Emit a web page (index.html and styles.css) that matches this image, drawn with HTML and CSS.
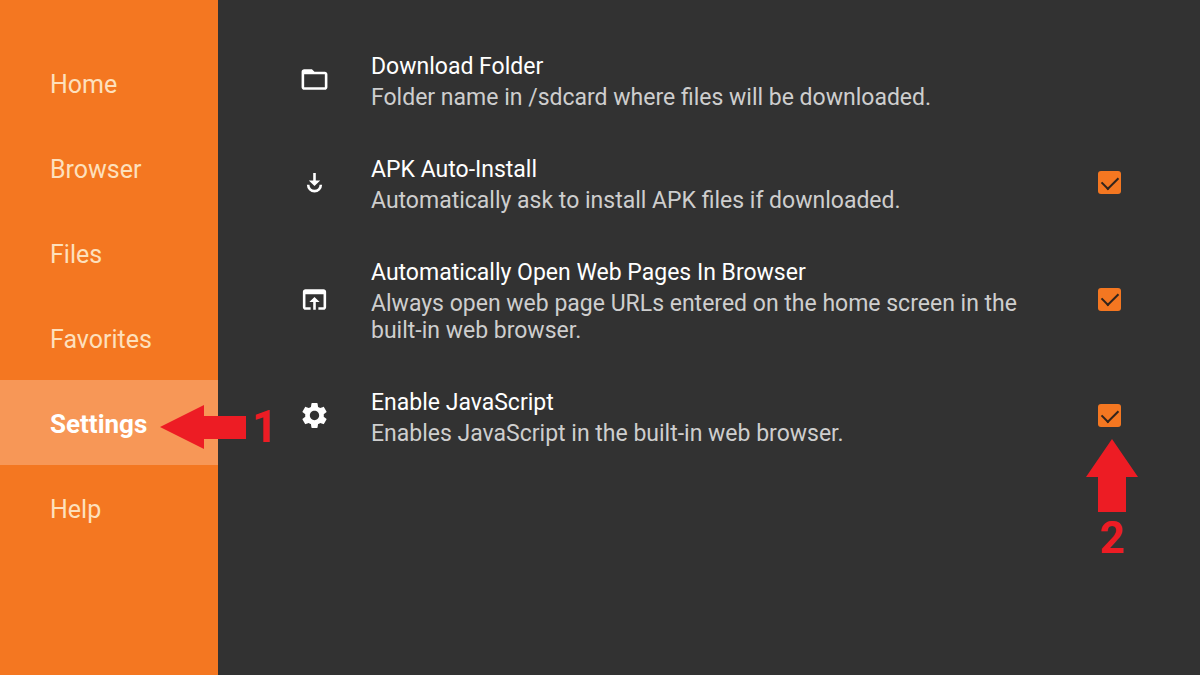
FILE: index.html
```html
<!DOCTYPE html>
<html lang="en">

<head>
  <meta charset="UTF-8">
  <meta name="viewport" content="width=device-width, initial-scale=1">
  <title>Settings</title>
  <link rel="stylesheet" href="styles.css">
</head>

<body>
  <!-- side menu -->
  <nav class="menu">
    <ul>
      <li><a class="menu-item" href="#home">Home</a></li>
      <li><a class="menu-item" href="#browser">Browser</a></li>
      <li><a class="menu-item" href="#files">Files</a></li>
      <li><a class="menu-item" href="#favorites">Favorites</a></li>
      <li class="current">
        <a class="menu-item active" href="#settings">Settings</a>
        <div class="step step-left">
          <svg width="86" height="46" viewBox="0 0 86 46"><path d="M0 23L44 1v11h42v23H44v10z"/></svg>
          <span>1</span>
        </div>
      </li>
      <li><a class="menu-item" href="#help">Help</a></li>
    </ul>
  </nav>

  <!-- settings list -->
  <main class="settings">
    <div class="row">
      <svg class="icon" viewBox="0 0 24 24"><path d="M20 6h-8l-2-2H4c-1.1 0-1.99.9-1.99 2L2 18c0 1.1.9 2 2 2h16c1.1 0 2-.9 2-2V8c0-1.1-.9-2-2-2zm0 12H4V8h16v10z"/></svg>
      <div class="text">
        <div class="title">Download Folder</div>
        <p>Folder name in /sdcard where files will be downloaded.</p>
      </div>
    </div>

    <div class="row">
      <svg class="icon" viewBox="0 0 24 24">
        <path d="M11 4.7h2v5.8h3.4L12 14.8l-4.4-4.3H11z"/>
        <path class="stroke" d="M7.1 13.8a4.9 4.9 0 0 0 9.8 0"/>
      </svg>
      <div class="text">
        <label class="title" for="auto-install">APK Auto-Install</label>
        <p>Automatically ask to install APK files if downloaded.</p>
      </div>
      <div class="check">
        <input type="checkbox" id="auto-install" checked>
      </div>
    </div>

    <div class="row">
      <svg class="icon" viewBox="0 0 24 24"><path d="M19 4H5c-1.11 0-2 .9-2 2v12c0 1.1.89 2 2 2h4v-2H5V8h14v10h-4v2h4c1.1 0 2-.9 2-2V6c0-1.1-.89-2-2-2zm-7 6l-4 4h3v6h2v-6h3l-4-4z"/></svg>
      <div class="text">
        <label class="title" for="open-pages">Automatically Open Web Pages In Browser</label>
        <p>Always open web page URLs entered on the home screen in the built-in web browser.</p>
      </div>
      <div class="check">
        <input type="checkbox" id="open-pages" checked>
      </div>
    </div>

    <div class="row">
      <svg class="icon" viewBox="0 0 24 24"><path d="M19.14 12.94c.04-.3.06-.61.06-.94 0-.32-.02-.64-.07-.94l2.03-1.58c.18-.14.23-.41.12-.61l-1.92-3.32c-.12-.22-.37-.29-.59-.22l-2.39.96c-.5-.38-1.03-.7-1.62-.94l-.36-2.54c-.04-.24-.24-.41-.48-.41h-3.84c-.24 0-.43.17-.47.41l-.36 2.54c-.59.24-1.13.57-1.62.94l-2.39-.96c-.22-.08-.47 0-.59.22L2.74 8.87c-.12.21-.08.47.12.61l2.03 1.58c-.05.3-.09.63-.09.94s.02.64.07.94l-2.03 1.58c-.18.14-.23.41-.12.61l1.92 3.32c.12.22.37.29.59.22l2.39-.96c.5.38 1.03.7 1.62.94l.36 2.54c.05.24.24.41.48.41h3.84c.24 0 .44-.17.47-.41l.36-2.54c.59-.24 1.13-.56 1.62-.94l2.39.96c.22.08.47 0 .59-.22l1.92-3.32c.12-.22.07-.47-.12-.61l-2.01-1.58zM12 15.6c-1.98 0-3.6-1.62-3.6-3.6s1.62-3.6 3.6-3.6 3.6 1.62 3.6 3.6-1.62 3.6-3.6 3.6z"/></svg>
      <div class="text">
        <label class="title" for="javascript">Enable JavaScript</label>
        <p>Enables JavaScript in the built-in web browser.</p>
      </div>
      <div class="check">
        <input type="checkbox" id="javascript" checked>
        <div class="step step-up">
          <svg width="52" height="74" viewBox="0 0 52 74"><path d="M26 0l26 38H40v35H12V38H0z"/></svg>
          <span>2</span>
        </div>
      </div>
    </div>
  </main>
</body>

</html>
```

FILE: styles.css
```css
* {
  box-sizing: border-box;
}

body {
  margin: 0;
  min-height: 100vh;
  display: flex;
  background-color: #323232;
  color: #fff;
  font-family: Roboto, sans-serif;
}

ul {
  list-style: none;
  margin: 0;
  padding: 0;
}

p {
  margin: 0;
}

/* side menu */
.menu {
  flex: none;
  width: 218px;
  padding-top: 40px;
  background-color: #f47721;
}

.menu-item {
  display: flex;
  align-items: center;
  height: 85px;
  padding: 3px 0 0 50px;
  color: #fde0bd;
  font-size: 25px;
  text-decoration: none;
}

.menu-item.active {
  background-color: #f79757;
  color: #fff;
  font-size: 26px;
  font-weight: bold;
}

.current {
  position: relative;
}

/* settings list */
.settings {
  flex: 1;
  display: flex;
  flex-direction: column;
  gap: 40px;
  padding: 48px 79px 48px 81px;
}

.row {
  display: flex;
  align-items: center;
  gap: 41px;
}

.icon {
  flex: none;
  width: 31px;
  height: 31px;
  fill: #fff;
}

.icon .stroke {
  fill: none;
  stroke: #fff;
  stroke-width: 2;
}

.text {
  flex: 1;
  padding-top: 5px;
  font-size: 23px;
  line-height: 27px;
}

.title {
  display: block;
  margin-bottom: 4px;
}

.text p {
  color: #cecece;
}

.check {
  position: relative;
  flex: none;
}

input[type='checkbox'] {
  appearance: none;
  display: grid;
  place-content: center;
  width: 23px;
  height: 23px;
  margin: 0;
  border-radius: 3px;
  background-color: #f47721;
}

input[type='checkbox']:checked::before {
  content: '';
  width: 8px;
  height: 14px;
  border: solid #32241c;
  border-width: 0 2px 2px 0;
  transform: translateY(-2px) rotate(45deg);
}

/* numbered arrows */
.step {
  position: absolute;
  display: flex;
  align-items: center;
  color: #ed1c24;
  font: bold 44px/50px Roboto, sans-serif;
}

.step svg {
  fill: #ed1c24;
}

.step-left {
  top: 22px;
  left: 160px;
  gap: 6px;
}

.step-up {
  top: 35px;
  left: -12px;
  flex-direction: column;
}
```
